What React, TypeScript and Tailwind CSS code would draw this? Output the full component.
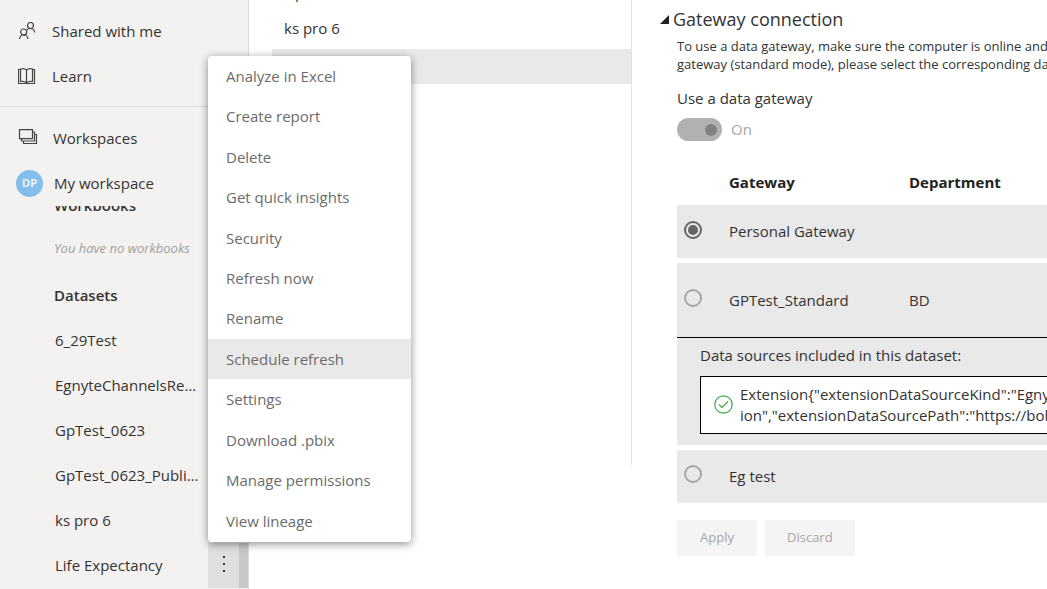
import React, { useState } from 'react';

interface Gateway {
  id: string;
  name: string;
  department: string;
  sources?: string[];
}

const gateways: Gateway[] = [
  { id: 'personal', name: 'Personal Gateway', department: '' },
  {
    id: 'standard',
    name: 'GPTest_Standard',
    department: 'BD',
    sources: ['Extension{"extensionDataSourceKind":"Egnyte', 'ion","extensionDataSourcePath":"https://bobs'],
  },
  { id: 'eg', name: 'Eg test', department: '' },
];

const datasets = ['6_29Test', 'EgnyteChannelsReport', 'GpTest_0623', 'GpTest_0623_Publish', 'ks pro 6', 'Life Expectancy'];

const menuItems = [
  'Analyze in Excel',
  'Create report',
  'Delete',
  'Get quick insights',
  'Security',
  'Refresh now',
  'Rename',
  'Schedule refresh',
  'Settings',
  'Download .pbix',
  'Manage permissions',
  'View lineage',
];

const SharedIcon = () => (
  <svg width="20" height="20" viewBox="0 0 20 20" fill="none" stroke="#444" strokeWidth="1.2">
    <circle cx="12.5" cy="3.5" r="3" />
    <circle cx="5.7" cy="10" r="3" />
    <path d="M1.500 17c.3-2.500 2-4 4.200-4s4 1.500 4.300 4M8.700 8.200c.8-1.100 2.200-1.700 3.800-1.700 2.200 0 3.900 1.500 4.200 4" />
  </svg>
);

const LearnIcon = () => (
  <svg width="20" height="20" viewBox="0 0 20 20" fill="none" stroke="#444" strokeWidth="1.2">
    <path d="M2.500 2.500h-2v14h16v-14h-2" />
    <path d="M8.500 3C7 1.600 4.500 1.400 2.500 2v12.500c2-.4 4.500-.2 6 1.200 1.500-1.400 4-1.600 6-1.200V2c-2-.6-4.500-.4-6 1zv13" />
  </svg>
);

const WorkspacesIcon = () => (
  <svg width="20" height="20" viewBox="0 0 20 20" fill="none" stroke="#444" strokeWidth="1.2">
    <path d="M1.500.600h13v9h-13zM14.500 3h2v9h-13V9.600M16.500 5.500h2v9h-13V12" />
  </svg>
);

const Sidebar: React.FC = () => (
  <nav className="flex w-[249px] shrink-0 flex-col border-r border-[#dddcda] bg-[#f3f2f1]">
    <div className="border-b border-[#dddcda] pt-[9px] pb-[7px]">
      <a href="#shared" className="flex h-[45px] items-center gap-[14px] pl-[18px]">
        <SharedIcon />
        Shared with me
      </a>
      <a href="#learn" className="flex h-[45px] items-center gap-[14px] pl-[18px]">
        <LearnIcon />
        Learn
      </a>
    </div>
    <div className="pt-[9px]">
      <a href="#workspaces" className="flex h-[45px] items-center gap-[15px] pl-[18px]">
        <WorkspacesIcon />
        Workspaces
      </a>
      <a href="#my" className="flex h-[45px] items-center gap-[11px] pl-4">
        <span className="flex size-[27px] items-center justify-center rounded-full bg-[#83beec] text-[11px] font-semibold text-white">
          DP
        </span>
        My workspace
      </a>
    </div>
    <div className="min-h-0 flex-1 overflow-hidden">
      <div className="-mt-[23px]">
        <h3 className="flex h-[45px] items-center pl-[54px] font-semibold">Workbooks</h3>
        <p className="flex h-[45px] items-center pb-1 pl-[54px] text-[13px] text-[#a19f9d] italic">You have no workbooks</p>
        <h3 className="flex h-[45px] items-center pl-[54px] font-semibold">Datasets</h3>
        <ul>
          {datasets.map((name) => (
            <li key={name} className="flex h-[45px] items-center pl-[55px]">
              <a href="#dataset" className="w-[146px] truncate">
                {name}
              </a>
              {name === 'Life Expectancy' && (
                <button
                  aria-label="More options"
                  className="ml-auto flex h-full w-10 flex-col items-center justify-center gap-[5px] border-r-[9px] border-[#c8c8c8] bg-[#e1dfdd] pb-[3px]"
                >
                  <i className="size-[2px] bg-[#333]" />
                  <i className="size-[2px] bg-[#333]" />
                  <i className="size-[2px] bg-[#333]" />
                </button>
              )}
            </li>
          ))}
        </ul>
      </div>
    </div>
  </nav>
);

const ContextMenu: React.FC = () => (
  <div
    role="menu"
    className="absolute top-14 left-[208px] flex h-[486px] w-[203px] flex-col overflow-hidden rounded bg-white pb-px text-[#6b6b6b] shadow-[0_2px_8px_rgba(0,0,0,0.45)]"
  >
    {menuItems.map((item) => (
      <button
        key={item}
        role="menuitem"
        className={`flex-1 px-[18px] text-left ${item === 'Schedule refresh' ? 'bg-[#e9e9e9]' : ''}`}
      >
        {item}
      </button>
    ))}
  </div>
);

const GatewaySettings: React.FC = () => {
  const [selected, setSelected] = useState('personal');

  return (
    <main className="min-w-0 flex-1 overflow-hidden pt-[7px] pl-[28px] whitespace-nowrap">
      <h2 className="flex h-6 items-center gap-1 text-lg">
        <svg width="9" height="9" viewBox="0 0 9 9">
          <path d="M9 0v9H0z" fill="#222" />
        </svg>
        Gateway connection
      </h2>
      <div className="pl-[17px]">
        <p className="pt-[6px] text-[13px] leading-[18px]">
          To use a data gateway, make sure the computer is online and the
          <br />
          gateway (standard mode), please select the corresponding data
        </p>
        <p className="mt-[14px] leading-[22px]">Use a data gateway</p>
        <label className="mt-[9px] flex items-center gap-[9px] text-[#a6a6a6]">
          <span className="flex h-[23px] w-[45px] items-center justify-end rounded-full bg-[#b1b1b1] pr-[5px]">
            <input type="checkbox" checked disabled readOnly className="size-3 appearance-none rounded-full bg-[#808080]" />
          </span>
          On
        </label>
        <table className="mt-[19px] w-[600px] table-fixed border-collapse text-left">
          <colgroup>
            <col className="w-[52px]" />
            <col className="w-[180px]" />
            <col />
          </colgroup>
          <thead>
            <tr className="h-[45px] text-[#222]">
              <th />
              <th className="font-bold">Gateway</th>
              <th className="font-bold">Department</th>
            </tr>
          </thead>
          {gateways.map((gateway) => (
            <tbody key={gateway.id}>
              <tr className={`bg-[#e9e9e9] ${gateway.sources ? 'h-[74px] border-b border-black' : 'h-[53px]'}`}>
                <td className="pl-[7px]">
                  <input
                    type="radio"
                    name="gateway"
                    aria-label={gateway.name}
                    checked={selected === gateway.id}
                    onChange={() => setSelected(gateway.id)}
                    className="mb-1 block size-[18px] appearance-none rounded-full border-2 border-[#a6a6a6] checked:border-[#666] checked:bg-[#666] checked:bg-clip-content checked:p-[2px]"
                  />
                </td>
                <td>{gateway.name}</td>
                <td>{gateway.department}</td>
              </tr>
              {gateway.sources && (
                <tr className="bg-[#e9e9e9]">
                  <td colSpan={3} className="pt-[6px] pb-[11px] pl-[23px]">
                    <p className="leading-[22px]">Data sources included in this dataset:</p>
                    <div className="mt-[10px] flex h-[58px] items-center gap-[7px] border border-black bg-white pl-[13px] leading-[21px]">
                      <svg width="19" height="19" viewBox="0 0 19 19" fill="none" stroke="#37a849" strokeWidth="1.2">
                        <circle cx="9.5" cy="9.5" r="8.7" />
                        <path d="M5 9.500l3 3 6-6" />
                      </svg>
                      <p>
                        {gateway.sources[0]}
                        <br />
                        {gateway.sources[1]}
                      </p>
                    </div>
                  </td>
                </tr>
              )}
              <tr className="h-[5px]">
                <td colSpan={3} />
              </tr>
            </tbody>
          ))}
        </table>
        <div className="mt-3 flex gap-2 text-[13px] text-[#a6a6a6]">
          <button className="h-9 min-w-20 bg-[#f4f4f4] px-[22px]">Apply</button>
          <button className="h-9 min-w-20 bg-[#f4f4f4] px-[22px]">Discard</button>
        </div>
      </div>
    </main>
  );
};

const App: React.FC = () => (
  <div className="relative flex h-screen overflow-hidden bg-white font-['Open_Sans',sans-serif] text-[15px] text-[#333]">
    <Sidebar />
    <section className="h-[465px] w-[383px] shrink-0 overflow-hidden border-r border-[#e1e1e1] pl-[23px]">
      <ul className="-mt-[27px] flex flex-col gap-[3px]">
        <li className="flex h-[35px] items-center pt-1 pl-3">GpTest_0623</li>
        <li className="flex h-[35px] items-center pl-3">ks pro 6</li>
        <li className="h-[35px] bg-[#e9e9e9]" />
      </ul>
    </section>
    <GatewaySettings />
    <ContextMenu />
  </div>
);

export default App;
